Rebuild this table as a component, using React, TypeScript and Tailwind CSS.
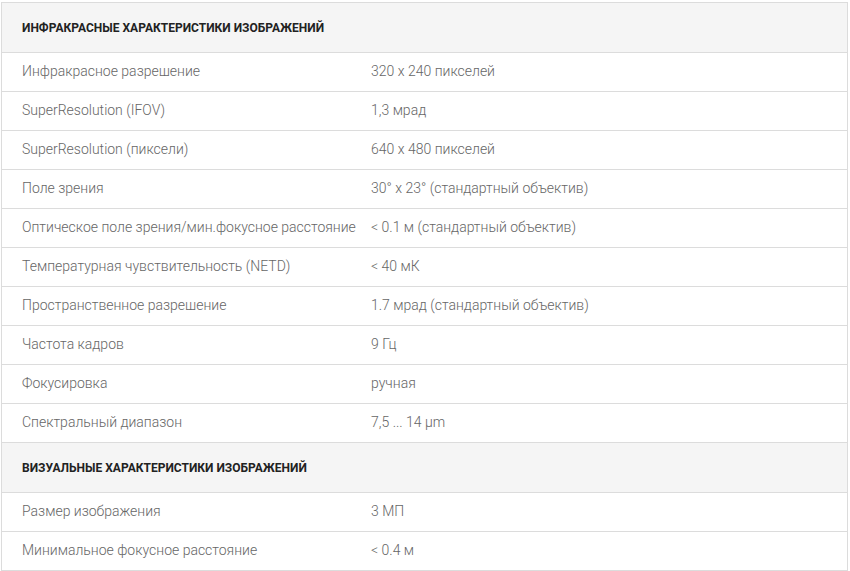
const infrared: [string, string][] = [
  ["Инфракрасное разрешение", "320 x 240 пикселей"],
  ["SuperResolution (IFOV)", "1,3 мрад"],
  ["SuperResolution (пиксели)", "640 x 480 пикселей"],
  ["Поле зрения", "30° x 23° (стандартный объектив)"],
  ["Оптическое поле зрения/мин.фокусное расстояние", "< 0.1 м (стандартный объектив)"],
  ["Температурная чувствительность (NETD)", "< 40 мК"],
  ["Пространственное разрешение", "1.7 мрад (стандартный объектив)"],
  ["Частота кадров", "9 Гц"],
  ["Фокусировка", "ручная"],
  ["Спектральный диапазон", "7,5 ... 14 µm"],
];

const visual: [string, string][] = [
  ["Размер изображения", "3 МП"],
  ["Минимальное фокусное расстояние", "< 0.4 м"],
];

function SectionHeader({ title }: { title: string }) {
  return (
    <div className="h-[50px] flex items-center px-5 bg-[#f5f5f5] border-b border-[#dcdcdc]">
      <span className="text-[12px] font-bold uppercase text-[#222]">{title}</span>
    </div>
  );
}

function Row({ label, value, last }: { label: string; value: string; last?: boolean }) {
  return (
    <div
      className={
        last
          ? "h-[38px] grid grid-cols-[349px_1fr] items-center pb-[2px] text-[14px] font-light text-[#666] whitespace-nowrap"
          : "h-[39px] grid grid-cols-[349px_1fr] items-center pb-[2px] text-[14px] font-light text-[#666] whitespace-nowrap border-b border-[#dcdcdc]"
      }
    >
      <div className="pl-5">{label}</div>
      <div className="pl-5">{value}</div>
    </div>
  );
}

export default function App() {
  return (
    <div className="w-[850px] h-[571px] bg-white pt-[2px] pl-[1px] font-['Roboto',sans-serif]">
      <div className="w-[847px] border border-[#dcdcdc]">
        <SectionHeader title="Инфракрасные характеристики изображений" />
        {infrared.map(([l, v]) => (
          <Row key={l} label={l} value={v} />
        ))}
        <SectionHeader title="Визуальные характеристики изображений" />
        {visual.map(([l, v], i) => (
          <Row key={l} label={l} value={v} last={i === visual.length - 1} />
        ))}
      </div>
    </div>
  );
}
